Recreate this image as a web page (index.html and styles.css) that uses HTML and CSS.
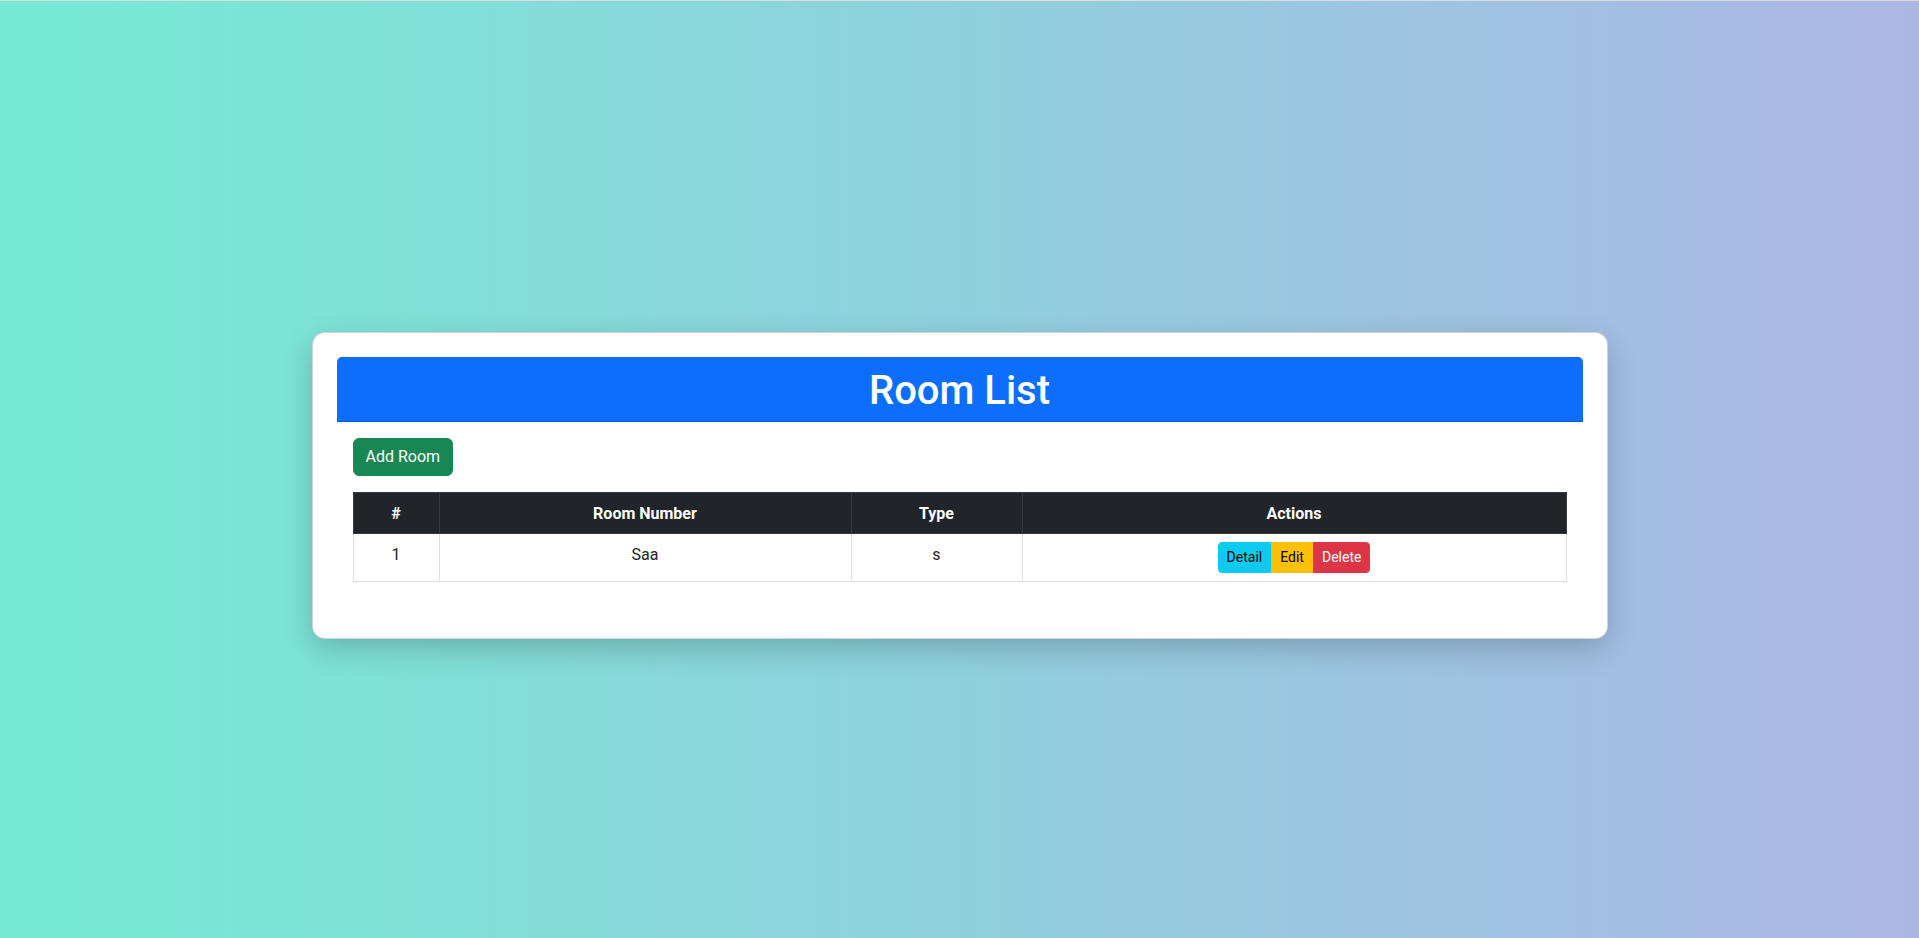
FILE: index.html
```html
<!DOCTYPE html>
<html lang="en">
<head>
<meta charset="utf-8">
<title>Room List</title>
<link rel="stylesheet" href="styles.css">
</head>
<body>
<div class="page">
  <div class="container">
    <div class="card">
      <div class="card-header">
        <h1 class="title">Room List</h1>
      </div>
      <div class="card-body">
        <button class="btn btn-success">Add Room</button>
        <table class="table">
          <colgroup>
            <col class="c-num">
            <col class="c-room">
            <col class="c-type">
            <col class="c-actions">
          </colgroup>
          <thead>
            <tr>
              <th>#</th>
              <th>Room Number</th>
              <th>Type</th>
              <th>Actions</th>
            </tr>
          </thead>
          <tbody>
            <tr>
              <td>1</td>
              <td>Saa</td>
              <td>s</td>
              <td>
                <div class="btn-group">
                  <button class="btn-sm btn-info">Detail</button>
                  <button class="btn-sm btn-warning">Edit</button>
                  <button class="btn-sm btn-danger">Delete</button>
                </div>
              </td>
            </tr>
          </tbody>
        </table>
      </div>
    </div>
  </div>
</div>
</body>
</html>
```

FILE: styles.css
```css
* { box-sizing: border-box; }

html, body {
  margin: 0;
  padding: 0;
}

body {
  font-family: "Segoe UI", Roboto, "Noto Sans", "Liberation Sans", sans-serif;
  font-size: 16px;
  line-height: 1.5;
  color: #212529;
  background: linear-gradient(to right, #74ebd5, #acb6e5);
  min-height: 100vh;
  border-top: 1px solid #dcdcdc;
}

.page {
  min-height: calc(100vh - 1px);
  display: flex;
  align-items: center;
}

.container {
  width: 1320px;
  margin: 31px auto 0;
  padding: 0 12px;
}

.card {
  background: #fff;
  border: 1px solid rgba(0, 0, 0, 0.175);
  border-radius: 13px;
  padding: 24px;
  box-shadow: 0 10px 30px rgba(0, 0, 0, 0.2);
}

.card-header {
  background: #0d6efd;
  color: #fff;
  text-align: center;
  padding: 10px 16px 6px;
  border-radius: 5px 5px 0 0;
  border-bottom: 1px solid rgba(0, 0, 0, 0.175);
}

.title {
  margin: 0;
  font-size: 40px;
  font-weight: 500;
  line-height: 1.2;
}

.card-body {
  padding: 16px;
}

.btn {
  display: inline-block;
  font-family: inherit;
  font-size: 16px;
  line-height: 24px;
  padding: 6px 12px;
  border: 1px solid transparent;
  border-radius: 6px;
  margin-bottom: 16px;
  cursor: pointer;
}

.btn-success {
  background: #198754;
  border-color: #198754;
  color: #fff;
}

.table {
  width: 100%;
  border-collapse: collapse;
  margin-bottom: 16px;
  table-layout: fixed;
}

.c-num { width: 86px; }
.c-room { width: 412px; }
.c-type { width: 171px; }
.c-actions { width: auto; }

.table th,
.table td {
  padding: 9px 8px 7px;
  text-align: center;
  vertical-align: top;
  border: 1px solid #dee2e6;
}

.table td:last-child {
  padding: 8px;
}

.table th {
  background: #212529;
  color: #fff;
  font-weight: 700;
  border-color: #373b3e;
}

.btn-group {
  display: inline-flex;
  vertical-align: middle;
}

.btn-sm {
  font-family: inherit;
  font-size: 14px;
  line-height: 21px;
  padding: 4px 8px;
  border: 1px solid transparent;
  margin: 0;
  border-radius: 0;
  cursor: pointer;
}

.btn-group .btn-sm:first-child { border-radius: 4px 0 0 4px; }
.btn-group .btn-sm:last-child { border-radius: 0 4px 4px 0; }

.btn-info { background: #0dcaf0; border-color: #0dcaf0; color: #000; }
.btn-warning { background: #ffc107; border-color: #ffc107; color: #000; }
.btn-danger { background: #dc3545; border-color: #dc3545; color: #fff; }
```
